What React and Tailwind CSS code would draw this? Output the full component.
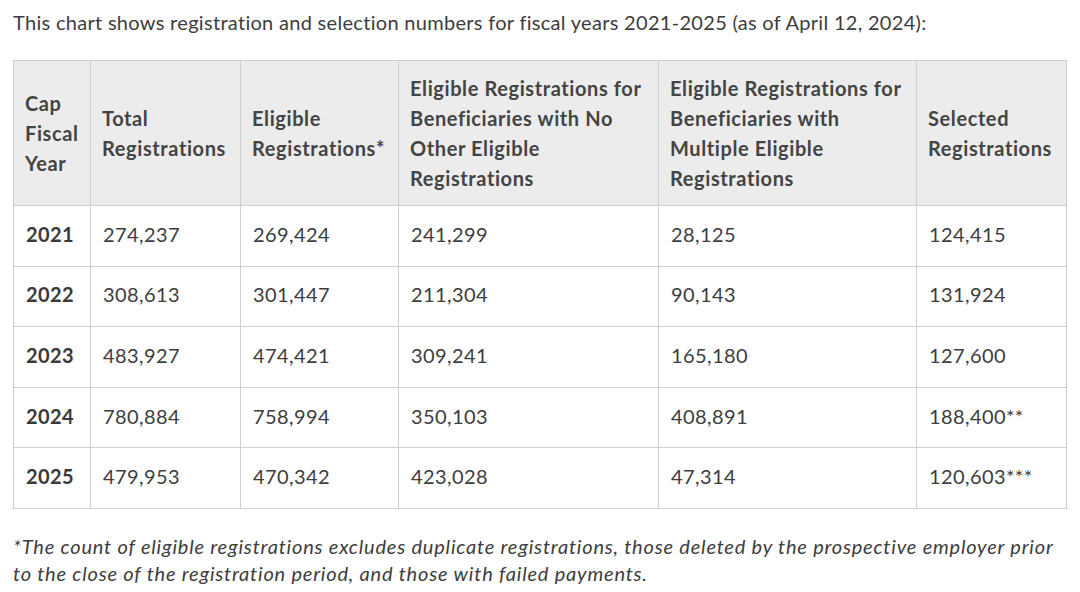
import React from "react";

const rows = [
  ["2021", "274,237", "269,424", "241,299", "28,125", "124,415"],
  ["2022", "308,613", "301,447", "211,304", "90,143", "131,924"],
  ["2023", "483,927", "474,421", "309,241", "165,180", "127,600"],
  ["2024", "780,884", "758,994", "350,103", "408,891", "188,400**"],
  ["2025", "479,953", "470,342", "423,028", "47,314", "120,603***"],
];

export default function App() {
  return (
    <div
      className="w-[1080px] h-[592px] bg-white text-[#3d3d3d] overflow-hidden"
      style={{ fontFamily: "Lato, 'Liberation Sans', sans-serif" }}
    >
      <p className="pl-[13px] pt-[9px] text-[20px] leading-[26px] tracking-[0.3px]">
        This chart shows registration and selection numbers for fiscal years 2021-2025 (as of April 12, 2024):
      </p>
      <table className="ml-[13px] mt-[25px] w-[1053px] table-fixed border-collapse text-[20px]">
        <colgroup>
          <col className="w-[77px]" />
          <col className="w-[150px]" />
          <col className="w-[158px]" />
          <col className="w-[260px]" />
          <col className="w-[258px]" />
          <col className="w-[150px]" />
        </colgroup>
        <thead>
          <tr className="h-[145px] bg-[#ececec]">
            {[
              "Cap Fiscal Year",
              "Total Registrations",
              "Eligible Registrations*",
              "Eligible Registrations for Beneficiaries with No Other Eligible Registrations",
              "Eligible Registrations for Beneficiaries with Multiple Eligible Registrations",
              "Selected Registrations",
            ].map((h, i) => (
              <th
                key={i}
                className="border border-[#cfcfcf] pl-[11px] pr-[8px] text-left align-middle font-bold leading-[30px] tracking-[0.6px] text-[#444]"
              >
                {h}
              </th>
            ))}
          </tr>
        </thead>
        <tbody>
          {rows.map((r) => (
            <tr key={r[0]} className="h-[60.6px]">
              {r.map((c, i) => (
                <td
                  key={i}
                  className={
                    "border border-[#cfcfcf] px-[12px] pb-[4px] align-middle leading-[26px] tracking-[0.4px] " +
                    (i === 0 ? "font-bold text-[#3a3a3a]" : "")
                  }
                >
                  {c}
                </td>
              ))}
            </tr>
          ))}
        </tbody>
      </table>
      <p className="pl-[13px] pt-[24px] pr-[8px] text-[20px] italic leading-[27px] tracking-[0.8px]">
        *The count of eligible registrations excludes duplicate registrations, those deleted by the prospective employer prior to the close of the registration period, and those with failed payments.
      </p>
    </div>
  );
}
